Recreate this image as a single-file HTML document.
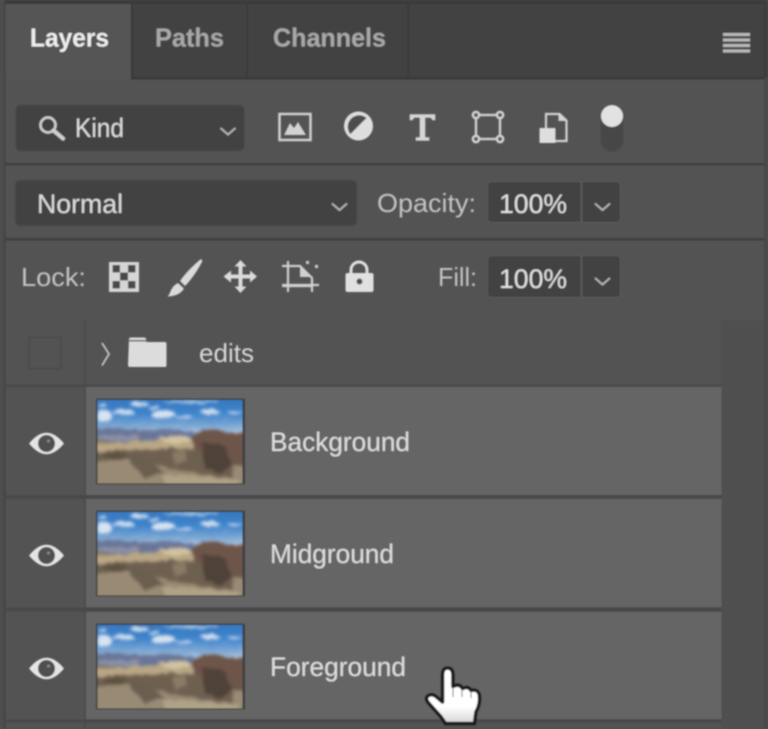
<!DOCTYPE html>
<html><head><meta charset="utf-8"><style>
html,body{margin:0;padding:0;background:#535353;width:768px;height:729px;overflow:hidden}
svg{display:block}
text{font-family:"Liberation Sans",sans-serif;fill:#d6d6d6}
</style></head><body>
<svg width="768" height="729" viewBox="0 0 768 729" xmlns="http://www.w3.org/2000/svg">
<defs>
<filter id="b" x="-2%" y="-2%" width="104%" height="104%"><feGaussianBlur stdDeviation="0.7"/></filter>
<filter id="org" x="0" y="0" width="100%" height="100%" color-interpolation-filters="sRGB">
<feTurbulence type="fractalNoise" baseFrequency="0.04" numOctaves="3" seed="7" result="n"/>
<feDisplacementMap in="SourceGraphic" in2="n" scale="16" xChannelSelector="R" yChannelSelector="G"/>
<feGaussianBlur stdDeviation="5"/>
</filter>
<linearGradient id="sky" x1="0" y1="0" x2="0" y2="1"><stop offset="0" stop-color="#2f6db4"/><stop offset=".55" stop-color="#3f84cc"/><stop offset=".85" stop-color="#7fa9d4"/><stop offset="1" stop-color="#b4c8dc"/></linearGradient>
<linearGradient id="hand" x1="0" y1="0" x2="0" y2="1"><stop offset="0" stop-color="#fff"/><stop offset=".7" stop-color="#fff"/><stop offset="1" stop-color="#d4d4d4"/></linearGradient>
<clipPath id="tc"><rect x="0" y="0" width="435" height="250"/></clipPath>
<g id="thumb">
<rect x="-1.500" y="-1.500" width="149" height="86" fill="#3e3e3e" rx="1"/>
<g transform="scale(.3333)" clip-path="url(#tc)">
<g filter="url(#org)" transform="translate(-25,-15)">
<rect x="-20" y="-20" width="520" height="330" fill="#887a66"/>
<rect x="-20" y="-20" width="520" height="135" fill="url(#sky)"/>
<g fill="#e8eef5" opacity=".9">
<ellipse cx="45" cy="62" rx="24" ry="18"/><ellipse cx="105" cy="52" rx="32" ry="8"/><ellipse cx="150" cy="28" rx="28" ry="6"/>
<ellipse cx="225" cy="58" rx="36" ry="12"/><ellipse cx="305" cy="21" rx="80" ry="3"/><ellipse cx="365" cy="50" rx="32" ry="8"/>
<ellipse cx="285" cy="66" rx="26" ry="4"/><ellipse cx="435" cy="53" rx="24" ry="3"/><ellipse cx="195" cy="38" rx="16" ry="4"/><ellipse cx="40" cy="30" rx="10" ry="5"/></g>
<path d="M0 98 L100 100 L170 106 L240 100 L310 110 L345 118 L345 145 L0 138Z" fill="#6a7698"/>
<path d="M25 122 H150 V136 H25Z" fill="#8d92a6"/>
<path d="M0 148 L120 140 L205 135 L250 122 L300 130 L345 155 L345 280 L0 280Z" fill="#b8a684"/>
<path d="M205 128 L290 122 L320 140 L250 145Z" fill="#d2c4a2"/>
<path d="M310 122 L345 102 L400 108 L480 118 V280 H330Z" fill="#6e544a"/>
<path d="M0 172 L130 165 L280 160 L350 170 L420 210 L480 212 V280 H0Z" fill="#6e6050"/>
<path d="M335 145 L395 145 L430 205 L405 235 L350 220Z" fill="#4f4238"/>
<path d="M40 180 L90 172 L120 185 L60 195Z" fill="#5c5040"/>
<path d="M250 170 L290 165 L295 200 L255 205Z" fill="#8a7a66"/>
<path d="M0 205 L100 192 L170 205 L260 225 L340 238 L430 250 L430 212 L480 215 V280 H0Z" fill="#988a74"/>
<path d="M115 190 L160 186 L225 232 L170 250Z" fill="#6b5e50"/>
<path d="M220 240 L340 245 L450 255 V280 H230Z" fill="#b0a286"/>
</g></g>
</g>
</defs>
<rect width="768" height="729" fill="#535353"/>
<g filter="url(#b)">
<!-- top / left edges -->
<rect x="0" y="0" width="768" height="4" fill="#3b3b3b"/>
<rect x="0" y="0" width="5" height="729" fill="#4e4e4e"/>
<rect x="4" y="0" width="1.500" height="729" fill="#434343"/>
<!-- tab bar -->
<rect x="131" y="4" width="633" height="74" fill="#424242"/>
<rect x="131" y="77" width="637" height="2.500" fill="#383838"/>
<rect x="131" y="4" width="2" height="75" fill="#383838"/>
<rect x="246.500" y="4" width="1.500" height="74" fill="#383838"/>
<rect x="407.500" y="4" width="1.500" height="74" fill="#383838"/>
<rect x="6" y="4" width="125" height="75" fill="#545454"/>
<text x="30" y="46.500" font-size="26" font-weight="700" textLength="79" lengthAdjust="spacingAndGlyphs" style="fill:#efefef">Layers</text>
<text x="155" y="46.500" font-size="26" font-weight="700" textLength="69" lengthAdjust="spacingAndGlyphs" style="fill:#a8a8a8">Paths</text>
<text x="273" y="46.500" font-size="26" font-weight="700" textLength="113" lengthAdjust="spacingAndGlyphs" style="fill:#a8a8a8">Channels</text>
<g fill="#b8b8b8"><rect x="723" y="33" width="27" height="3"/><rect x="723" y="38.500" width="27" height="3"/><rect x="723" y="44" width="27" height="3"/><rect x="723" y="49.500" width="27" height="3"/></g>

<!-- Kind row -->
<rect x="15.500" y="105" width="229" height="46" rx="5" fill="#434343" stroke="#4e4e4e"/>
<circle cx="48" cy="125" r="7.500" fill="none" stroke="#cfcfcf" stroke-width="2.500"/>
<path d="M53.500 130.500 L63 138.500" stroke="#cfcfcf" stroke-width="4" stroke-linecap="round"/>
<text x="75" y="137" font-size="27" textLength="49" lengthAdjust="spacingAndGlyphs" style="fill:#dcdcdc">Kind</text>
<path d="M220.500 128 L228 134.500 L235.500 128" fill="none" stroke="#b8b8b8" stroke-width="1.800"/>
<!-- image icon -->
<rect x="279.500" y="114" width="31" height="26" fill="none" stroke="#d2d2d2" stroke-width="2.500"/>
<path d="M284 135 L290 123 L294 128 L298 122 L306 135Z" fill="#d2d2d2"/>
<!-- adjustment -->
<circle cx="358.500" cy="126" r="14.500" fill="#dedede"/>
<path d="M350.400 134.100 A11.500 11.500 0 0 1 366.600 117.900Z" fill="#4e4e4e"/>
<!-- T -->
<path d="M410 120 V114.500 H435 V120 H432.500 L431 117.500 H425 V137.500 H429 V140.500 H416 V137.500 H420 V117.500 H414 L412.500 120Z" fill="#d6d6d6" stroke="#d6d6d6" stroke-width=".6"/>
<!-- transform -->
<g fill="none" stroke="#d2d2d2" stroke-width="2.400"><rect x="476" y="115" width="24" height="24"/><g fill="#565656"><circle cx="476" cy="115" r="3.200"/><circle cx="500" cy="115" r="3.200"/><circle cx="476" cy="139" r="3.200"/><circle cx="500" cy="139" r="3.200"/></g></g>
<!-- smart doc -->
<path d="M546 128 V114 H559.500 L566.500 120.500 V141 H555" fill="none" stroke="#d4d4d4" stroke-width="2.200"/>
<path d="M558.500 114 V121 H566Z" fill="#d4d4d4"/>
<rect x="539.500" y="128" width="16" height="15" fill="#dedede"/>
<!-- toggle -->
<rect x="600.500" y="106" width="23" height="46" rx="11.500" fill="#464646" stroke="#505050"/>
<circle cx="612" cy="116" r="11" fill="#e2e2e2"/>

<!-- divider -->
<rect x="5" y="163" width="763" height="2.500" fill="#414141"/>

<!-- Normal row -->
<rect x="15" y="180" width="342" height="46" rx="5" fill="#434343" stroke="#4e4e4e"/>
<text x="37" y="213" font-size="27" textLength="86" lengthAdjust="spacingAndGlyphs" style="fill:#dcdcdc">Normal</text>
<path d="M332 203.500 L339.500 210 L347 203.500" fill="none" stroke="#b8b8b8" stroke-width="1.800"/>
<text x="377" y="212" font-size="26" textLength="99" lengthAdjust="spacingAndGlyphs" style="fill:#c4c4c4">Opacity:</text>
<rect x="487.500" y="181.500" width="133" height="41" rx="4" fill="#434343" stroke="#5a5a5a"/>
<rect x="580.500" y="182" width="2" height="40" fill="#585858"/>
<text x="499" y="213" font-size="27" textLength="68" lengthAdjust="spacingAndGlyphs" style="fill:#e2e2e2">100%</text>
<path d="M595 203.500 L602.500 210 L610 203.500" fill="none" stroke="#b8b8b8" stroke-width="1.800"/>

<rect x="5" y="238" width="763" height="2.500" fill="#414141"/>

<!-- Lock row -->
<text x="21" y="286" font-size="26" textLength="65" lengthAdjust="spacingAndGlyphs" style="fill:#c4c4c4">Lock:</text>
<!-- checker -->
<rect x="110" y="263" width="28" height="28" fill="#d6d6d6" stroke="#d6d6d6" stroke-width="2"/>
<g fill="#4a4a4a"><rect x="112.500" y="265" width="7.500" height="7.500"/><rect x="128" y="265" width="7.500" height="7.500"/><rect x="120" y="272.500" width="8" height="8"/><rect x="112.500" y="281" width="7.500" height="7.500"/><rect x="128" y="281" width="7.500" height="7.500"/></g>
<!-- brush -->
<path d="M201 259 C196 263 186 272 180 281 L185 286 C192 279 199 268 202.500 261Z" fill="#dadada"/>
<path d="M178 283 L184 288.500 C181 294 174 296.500 167.500 296.500 C171 293.500 170 287 178 283Z" fill="#dadada"/>
<!-- move -->
<path d="M240.500 260 L246.500 266.500 H242.500 V274.500 H250 V270.500 L257 276.500 L250 282.500 V278.500 H242.500 V286.500 H246.500 L240.500 293 L234.500 286.500 H238.500 V278.500 H231 V282.500 L223.500 276.500 L231 270.500 V274.500 H238.500 V266.500 H234.500Z" fill="#dadada"/>
<!-- artboard lock -->
<g fill="none" stroke="#d0d0d0" stroke-width="2.200"><path d="M282 266 H300 L312 278 V286 H282"/><path d="M288 261 V292"/><path d="M282 285 H319"/><path d="M312 280 V292"/></g>
<path d="M300 267 V277 H311Z" fill="#d0d0d0"/>
<g fill="#d0d0d0"><rect x="306" y="261" width="3" height="3"/><rect x="315" y="265" width="3" height="3"/></g>
<!-- padlock -->
<path d="M351 273 V270 A8 8 0 0 1 367 270 V273" fill="none" stroke="#e0e0e0" stroke-width="3"/>
<rect x="345.500" y="273" width="28" height="19" rx="2" fill="#e0e0e0"/>
<circle cx="359.500" cy="281.500" r="3" fill="#4e4e4e"/>

<text x="438" y="286" font-size="26" textLength="39" lengthAdjust="spacingAndGlyphs" style="fill:#c4c4c4">Fill:</text>
<rect x="487.500" y="255.500" width="133" height="42" rx="4" fill="#434343" stroke="#5a5a5a"/>
<rect x="580.500" y="256" width="2" height="41" fill="#585858"/>
<text x="499" y="288" font-size="27" textLength="68" lengthAdjust="spacingAndGlyphs" style="fill:#e2e2e2">100%</text>
<path d="M595 278 L602.500 284.500 L610 278" fill="none" stroke="#b8b8b8" stroke-width="1.800"/>

<!-- scrollbar col -->
<rect x="721.500" y="320" width="43" height="409" fill="#4f4f4f"/>
<rect x="764" y="0" width="4" height="729" fill="#484848"/>
<rect x="764" y="0" width="4" height="78" fill="#3e3e3e"/>

<!-- group row -->
<rect x="84" y="320" width="2" height="409" fill="#4c4c4c"/>
<path d="M29 337.500 H61 V368.500 H29Z" fill="none" stroke="#4a4a4a" stroke-width="1.500"/>
<path d="M102 343 L109 354 L102 365.500" fill="none" stroke="#c4c4c4" stroke-width="1.800"/>
<path d="M129 339 Q129 337.500 131 337.500 H144 Q146 337.500 146 339 V342 H165 Q166.500 342 166.500 344 V365 Q166.500 367 165 367 H130 Q128 367 128 365Z" fill="#dcdcdc"/>
<rect x="128" y="340" width="20" height="1.500" fill="#565656"/>
<text x="199" y="362" font-size="26" textLength="55" lengthAdjust="spacingAndGlyphs" style="fill:#d8d8d8">edits</text>

<rect x="5" y="384.500" width="716.500" height="2.500" fill="#484848"/>
<!-- layers -->
<rect x="86" y="387" width="635.500" height="108" fill="#656565"/>
<rect x="86" y="499" width="635.500" height="108" fill="#656565"/>
<rect x="86" y="612" width="635.500" height="107" fill="#656565"/>
<rect x="5" y="495" width="716.500" height="4" fill="#4a4a4a"/>
<rect x="5" y="607.500" width="716.500" height="4" fill="#4a4a4a"/>
<rect x="5" y="719.500" width="716.500" height="3" fill="#4a4a4a"/>

<use href="#thumb" x="97.500" y="400"/>
<use href="#thumb" x="97.500" y="512"/>
<use href="#thumb" x="97.500" y="625"/>

<text x="270" y="451" font-size="26.500" textLength="140" lengthAdjust="spacingAndGlyphs" style="fill:#dedede">Background</text>
<text x="270" y="563" font-size="26.500" textLength="124" lengthAdjust="spacingAndGlyphs" style="fill:#dedede">Midground</text>
<text x="270" y="676" font-size="26.500" textLength="136" lengthAdjust="spacingAndGlyphs" style="fill:#dedede">Foreground</text>

<!-- eyes -->
<g id="eye">
<path d="M29 443.500 Q46.500 422 64 443.500 Q46.500 465 29 443.500Z" fill="#e4e4e4"/>
<circle cx="46.500" cy="443.500" r="8.500" fill="#505050"/>
<circle cx="48.500" cy="441" r="1.500" fill="#8a8a8a"/>
</g>
<use href="#eye" y="112"/>
<use href="#eye" y="225"/>

<!-- hand cursor -->
<path d="M442.500 675 Q442.500 668 447.500 668 Q453 668 453 675 V686.500 Q459.500 683 462.500 688.500 Q468.500 685.500 471 690.500 Q478 688.500 479.500 695.500 Q480.500 704 476 712 L474.500 723.500 H445.500 L441 717 L428.500 703 Q424.500 698 428.500 695.500 Q432.500 693.500 436 696.500 L442.500 702Z" fill="url(#hand)" stroke="#1a1a1a" stroke-width="3.600" stroke-linejoin="round"/>
<g stroke="#666" stroke-width="1"><path d="M453 687 V697"/><path d="M462 689 V697"/><path d="M471 691 V698"/></g>
</g>
</svg>
</body></html>
